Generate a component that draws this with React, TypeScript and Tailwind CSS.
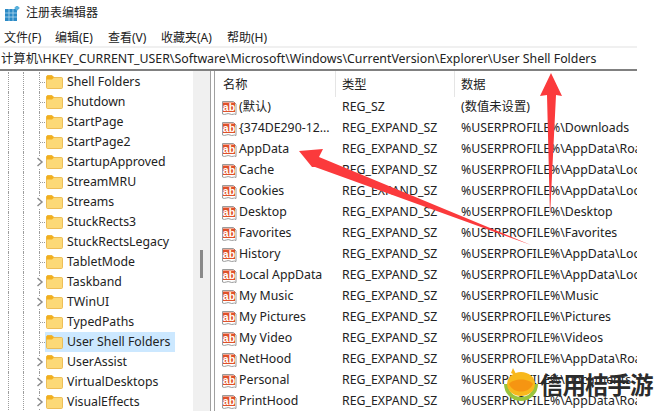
const treeRows = [
  { name: "Shell Folders" },
  { name: "Shutdown" },
  { name: "StartPage" },
  { name: "StartPage2" },
  { name: "StartupApproved", more: true },
  { name: "StreamMRU" },
  { name: "Streams", more: true },
  { name: "StuckRects3" },
  { name: "StuckRectsLegacy" },
  { name: "TabletMode" },
  { name: "Taskband", more: true },
  { name: "TWinUI", more: true },
  { name: "TypedPaths" },
  { name: "User Shell Folders", selected: true },
  { name: "UserAssist", more: true },
  { name: "VirtualDesktops", more: true },
  { name: "VisualEffects", more: true },
];

const X = "REG_EXPAND_SZ";
const P = "%USERPROFILE%\\";
const listRows = [
  ["(默认)", "REG_SZ", "(数值未设置)"],
  ["{374DE290-12...", X, P + "Downloads"],
  ["AppData", X, P + "AppData\\Roaming"],
  ["Cache", X, P + "AppData\\Local\\Microsoft"],
  ["Cookies", X, P + "AppData\\Local\\Microsoft"],
  ["Desktop", X, P + "Desktop"],
  ["Favorites", X, P + "Favorites"],
  ["History", X, P + "AppData\\Local\\Microsoft"],
  ["Local AppData", X, P + "AppData\\Local"],
  ["My Music", X, P + "Music"],
  ["My Pictures", X, P + "Pictures"],
  ["My Video", X, P + "Videos"],
  ["NetHood", X, P + "AppData\\Roaming"],
  ["Personal", X, P + "Documents"],
  ["PrintHood", X, P + "AppData\\Roaming"],
];

const menus = [
  { label: "文件(F)", w: "w-[51px]" },
  { label: "编辑(E)", w: "w-[53px]" },
  { label: "查看(V)", w: "w-[53px]" },
  { label: "收藏夹(A)", w: "w-[66px]" },
  { label: "帮助(H)", w: "w-[50px]" },
];

function RegIcon() {
  return (
    <svg width="16" height="16" viewBox="0 0 16 16" className="shrink-0">
      <path d="M1.5 1.5H12.5L15 4V14.5C13 13 11.5 15.5 9 14C6.5 12.5 4 15.5 1.5 14Z" fill="#fff" stroke="#9a9a9a" strokeWidth="1" />
      <rect x="2" y="2.5" width="12" height="9.5" fill="#e0512a" />
      <text x="8" y="10.5" textAnchor="middle" fontSize="10.5" fontWeight="700" fill="#fff" fontFamily="'Liberation Sans', sans-serif">ab</text>
    </svg>
  );
}

function Folder() {
  return (
    <svg width="17" height="14" viewBox="0 0 17 14" className="shrink-0">
      <path d="M0.5 2C0.5 1 1 0.5 2 0.5H6L8 2.5H15.5C16.2 2.5 16.5 3 16.5 3.5V12.5C16.5 13.2 16 13.5 15.5 13.5H1.5C1 13.5 0.5 13.2 0.5 12.5Z" fill="#fcd977" stroke="#e8b33f" strokeWidth="0.8" />
      <path d="M0.5 2C0.5 1 1 0.5 2 0.5H6L8 2.5L6 4.5H0.5Z" fill="#f2b01e" />
    </svg>
  );
}

function TreeRow({ name, more, selected }: { name: string; more?: boolean; selected?: boolean }) {
  return (
    <div className="flex h-5 shrink-0 items-stretch">
      <div className="ml-[8px] w-[15px] border-l border-dotted border-[#9c9c9c]" />
      <div className="w-[16px] border-l border-dotted border-[#9c9c9c]" />
      <div className="relative flex w-[6px] items-center border-l border-dotted border-[#9c9c9c]">
        {more ? (
          <svg width="8" height="12" viewBox="0 0 8 12" className="absolute -left-[4px] bg-white">
            <path d="M1.5 2L6 6L1.5 10" fill="none" stroke="#8a8a8a" strokeWidth="1.5" />
          </svg>
        ) : (
          <div className="w-full border-t border-dotted border-[#9c9c9c]" />
        )}
      </div>
      <div className={`flex h-5 items-center pl-[1px] ${selected ? "w-[130px] bg-[#cce8ff]" : ""}`}>
        <Folder />
        <span className="ml-[4px] whitespace-nowrap">{name}</span>
      </div>
    </div>
  );
}

function Arrows() {
  return (
    <svg width="659" height="411" viewBox="0 0 659 411" className="pointer-events-none absolute left-0 top-0">
      <path d="M551 73L562 96L556 95L550 216L547 95L540 96Z" fill="#fb3a3c" />
      <path d="M299 151L323 149L319 157L531 245L315 167L312 167Z" fill="#fb3a3c" />
    </svg>
  );
}

function Watermark() {
  return (
    <div className="absolute bottom-[7px] left-[503px] flex items-center">
      <svg width="36" height="38" viewBox="0 0 36 38">
        <path d="M3 18A15 15 0 0 0 33 18" fill="none" stroke="#9ac43c" strokeWidth="4" />
        <ellipse cx="18" cy="18" rx="14" ry="12" fill="#f8b81c" />
        <path d="M6 18C10 12 26 12 30 18C26 28 10 28 6 18Z" fill="#f69512" />
        <path d="M10 2L14 10L8 7Z" fill="#f8b81c" />
      </svg>
      <span className="ml-[1px] whitespace-nowrap text-[23.5px] font-bold leading-none tracking-[-1px] text-[#2b2b2b] [font-family:'Noto_Sans_CJK_SC',sans-serif]">
        信用桔手游
      </span>
    </div>
  );
}

export default function App() {
  return (
    <div className="relative flex h-[411px] w-[659px] flex-col overflow-hidden bg-white text-[12.3px] text-[#222] [font-family:'Noto_Sans','Noto_Sans_CJK_SC',sans-serif]">
      <div className="flex h-[26px] shrink-0 items-center pl-[5px]">
        <svg width="15" height="15" viewBox="0 0 15 15">
          <rect x="0" y="3" width="12" height="12" fill="#2b8ac6" />
          <path d="M4 3V15M8 3V15M0 7H12M0 11H12" stroke="#bfe0f2" strokeWidth="0.7" />
          <rect x="10" y="0" width="4" height="4" fill="#5ab1dc" transform="rotate(45 12 2)" />
        </svg>
        <span className="ml-[6px] text-[12px]">注册表编辑器</span>
      </div>
      <div className="flex h-[20px] shrink-0 items-center pl-[4px] pt-[4px] text-[12px]">
        {menus.map((m) => (
          <span key={m.label} className={m.w}>{m.label}</span>
        ))}
      </div>
      <div className="flex h-[25px] w-[637px] shrink-0 items-center border-t-[2px] border-b-[2px] border-t-[#f0f0f0] border-b-[#808080] pl-[1px] pt-[2px] text-[12.35px] whitespace-nowrap">
        计算机\HKEY_CURRENT_USER\Software\Microsoft\Windows\CurrentVersion\Explorer\User Shell Folders
      </div>
      <div className="flex min-h-0 w-[637px] flex-1">
        <div className="flex w-[193px] shrink-0 flex-col overflow-hidden pt-[1px]">
          {treeRows.map((r) => (
            <TreeRow key={r.name} name={r.name} more={r.more} selected={r.selected} />
          ))}
        </div>
        <div className="w-[17px] shrink-0 bg-[#f0f0f0] pl-[7px] pt-[179px]">
          <div className="h-[28px] w-[3px] bg-[#8a8a8a]" />
        </div>
        <div className="w-[5px] shrink-0 border-x border-x-[#a0a0a0]" />
        <div className="min-w-0 flex-1 overflow-hidden">
          <div className="flex h-[26px] items-center">
            <div className="h-full w-[120px] pl-[8px] pt-[5px]">名称</div>
            <div className="h-full w-[119px] border-l border-[#e5e5e5] pl-[6px] pt-[5px]">类型</div>
            <div className="h-full flex-1 border-l border-[#e5e5e5] pl-[6px] pt-[5px]">数据</div>
          </div>
          {listRows.map((r) => (
            <div key={r[0]} className="flex h-[21px] items-center whitespace-nowrap">
              <div className="flex w-[127px] shrink-0 items-center pl-[6px]">
                <RegIcon />
                <span className="ml-[2px]">{r[0]}</span>
              </div>
              <div className="w-[119px] shrink-0">{r[1]}</div>
              <div>{r[2]}</div>
            </div>
          ))}
        </div>
      </div>
      <Arrows />
      <Watermark />
    </div>
  );
}
